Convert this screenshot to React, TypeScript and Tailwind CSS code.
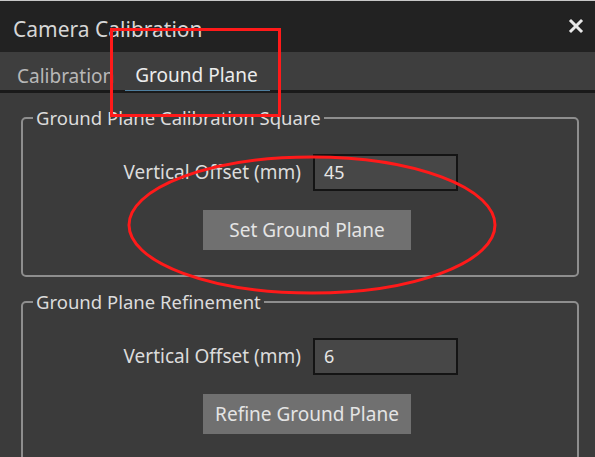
import React from "react";

function Group({ title, value, button, className }: { title: string; value: string; button: string; className?: string }) {
  return (
    <fieldset className={"border-2 border-[#8e8e8e] rounded-[5px] ml-[21px] mr-[16px] px-0 " + (className ?? "")}>
      <legend className="ml-[10px] px-[3px] text-[18.5px] leading-[20px] text-[#dcdcdc]">{title}</legend>
      <div className="flex items-center pl-[80px] mt-[26px]">
        <span className="w-[198px] text-right text-[19px] text-[#dcdcdc]">Vertical Offset (mm)</span>
        <div className="ml-[12px] w-[145px] h-[37px] bg-[#474747] border-2 border-[#141414] flex items-center pl-[9px] text-[18px] text-[#e6e6e6]">
          {value}
        </div>
      </div>
      <div className="flex pl-[180px] mt-[19px] mb-[25px]">
        <div className="w-[208px] h-[40px] bg-[#707070] flex items-center justify-center text-[19px] text-[#e4e4e4]">
          {button}
        </div>
      </div>
    </fieldset>
  );
}

export default function App() {
  return (
    <div
      className="relative w-[595px] h-[457px] overflow-hidden bg-[#3b3b3b] select-none"
      style={{ fontFamily: '"Noto Sans", "Open Sans", sans-serif' }}
    >
      <div className="h-[1px] bg-[#c8c8c8]" />
      <div className="h-[51px] bg-[#222222] flex items-center justify-between pl-[13px] pr-[10px]">
        <span className="text-[21px] text-[#d6d6d6] pt-[6px]">Camera Calibration</span>
        <svg width="16" height="16" viewBox="0 0 16 16" className="mr-[1px] mb-[2px]">
          <path d="M3 3 L13 13 M13 3 L3 13" stroke="#e8e8e8" strokeWidth="3" strokeLinecap="square" />
        </svg>
      </div>
      <div className="h-[38px] bg-[#3e3e3e] flex items-end pl-[17px]">
        <div className="h-full flex items-center pt-[11px] text-[19px] text-[#b8b8b8]">Calibration</div>
        <div className="ml-[11px] h-full flex flex-col">
          <div className="flex-1 flex items-center pt-[9px] pl-[10px] pr-[12px] text-[19px] text-[#ececec]">Ground Plane</div>
          <div className="h-[3px] bg-[#4f7f9f]" />
        </div>
      </div>
      <div className="h-[3px] bg-[#1a1a1a]" />
      <div className="pt-[15px]">
        <Group title="Ground Plane Calibration Square" value="45" button="Set Ground Plane" />
        <Group title="Ground Plane Refinement" value="6" button="Refine Ground Plane" className="mt-[15px]" />
      </div>

      {/* annotations */}
      <div className="absolute left-[110px] top-[28px] w-[171px] h-[89px] border-[3px] border-[#ff1a1a]" />
      <svg className="absolute left-0 top-0" width="595" height="457">
        <ellipse cx="312" cy="225" rx="183" ry="68" fill="none" stroke="#ff1a1a" strokeWidth="3" />
      </svg>
    </div>
  );
}
